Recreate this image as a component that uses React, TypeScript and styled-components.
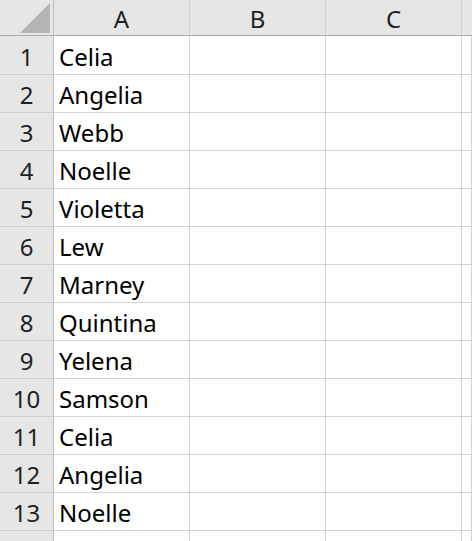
import React from 'react'
import styled, { createGlobalStyle } from 'styled-components'

const names = [
  'Celia',
  'Angelia',
  'Webb',
  'Noelle',
  'Violetta',
  'Lew',
  'Marney',
  'Quintina',
  'Yelena',
  'Samson',
  'Celia',
  'Angelia',
  'Noelle',
  '',
]

const columns = ['A', 'B', 'C', '']

const GlobalStyle = createGlobalStyle`
  html, body {
    margin: 0;
    padding: 0;
    background: #ffffff;
    overflow: hidden;
  }
  body {
    font-family: 'Noto Sans', 'Open Sans', sans-serif;
  }
`

const Sheet = styled.div`
  display: grid;
  grid-template-columns: 54px 136px 136px 136px 1fr;
  grid-template-rows: 36px 39px repeat(13, 38px);
  width: 472px;
  height: 541px;
  overflow: hidden;
`

const Corner = styled.div`
  position: relative;
  background: #e6e6e6;
  border-right: 1px solid #bdbdbd;
  border-bottom: 1px solid #ababab;
`

const Triangle = styled.svg`
  position: absolute;
  left: 20px;
  top: 3px;
`

const ColHeader = styled.div<{ $last?: boolean }>`
  display: flex;
  align-items: center;
  justify-content: center;
  background: #e6e6e6;
  border-right: ${({ $last }) => ($last ? 'none' : '1px solid #d0d0d0')};
  border-bottom: 1px solid #ababab;
  color: #1f1f1f;
  font-size: 24px;
  padding-top: 1px;
`

const RowHeader = styled.div`
  display: flex;
  align-items: center;
  justify-content: center;
  background: #e6e6e6;
  border-right: 1px solid #bdbdbd;
  border-bottom: 1px solid #d0d0d0;
  color: #1f1f1f;
  font-size: 24px;
  padding-top: 2px;
`

const Cell = styled.div`
  display: flex;
  align-items: center;
  padding: 2px 0 0 5px;
  border-right: 1px solid #d4d4d4;
  border-bottom: 1px solid #d4d4d4;
  color: #000000;
  font-size: 24px;
  white-space: nowrap;
  overflow: hidden;
`

export default function App() {
  return (
    <>
      <GlobalStyle />
      <Sheet>
        <Corner>
          <Triangle width="30" height="30" viewBox="0 0 30 30">
            <polygon points="30,0 30,30 0,30" fill="#b4b4b4" />
          </Triangle>
        </Corner>
        {columns.map((c, i) => (
          <ColHeader key={i} $last={i === columns.length - 1}>
            {c}
          </ColHeader>
        ))}
        {names.map((name, r) => (
          <React.Fragment key={r}>
            <RowHeader>{name ? r + 1 : ''}</RowHeader>
            <Cell>{name}</Cell>
            <Cell />
            <Cell />
            <Cell />
          </React.Fragment>
        ))}
      </Sheet>
    </>
  )
}
